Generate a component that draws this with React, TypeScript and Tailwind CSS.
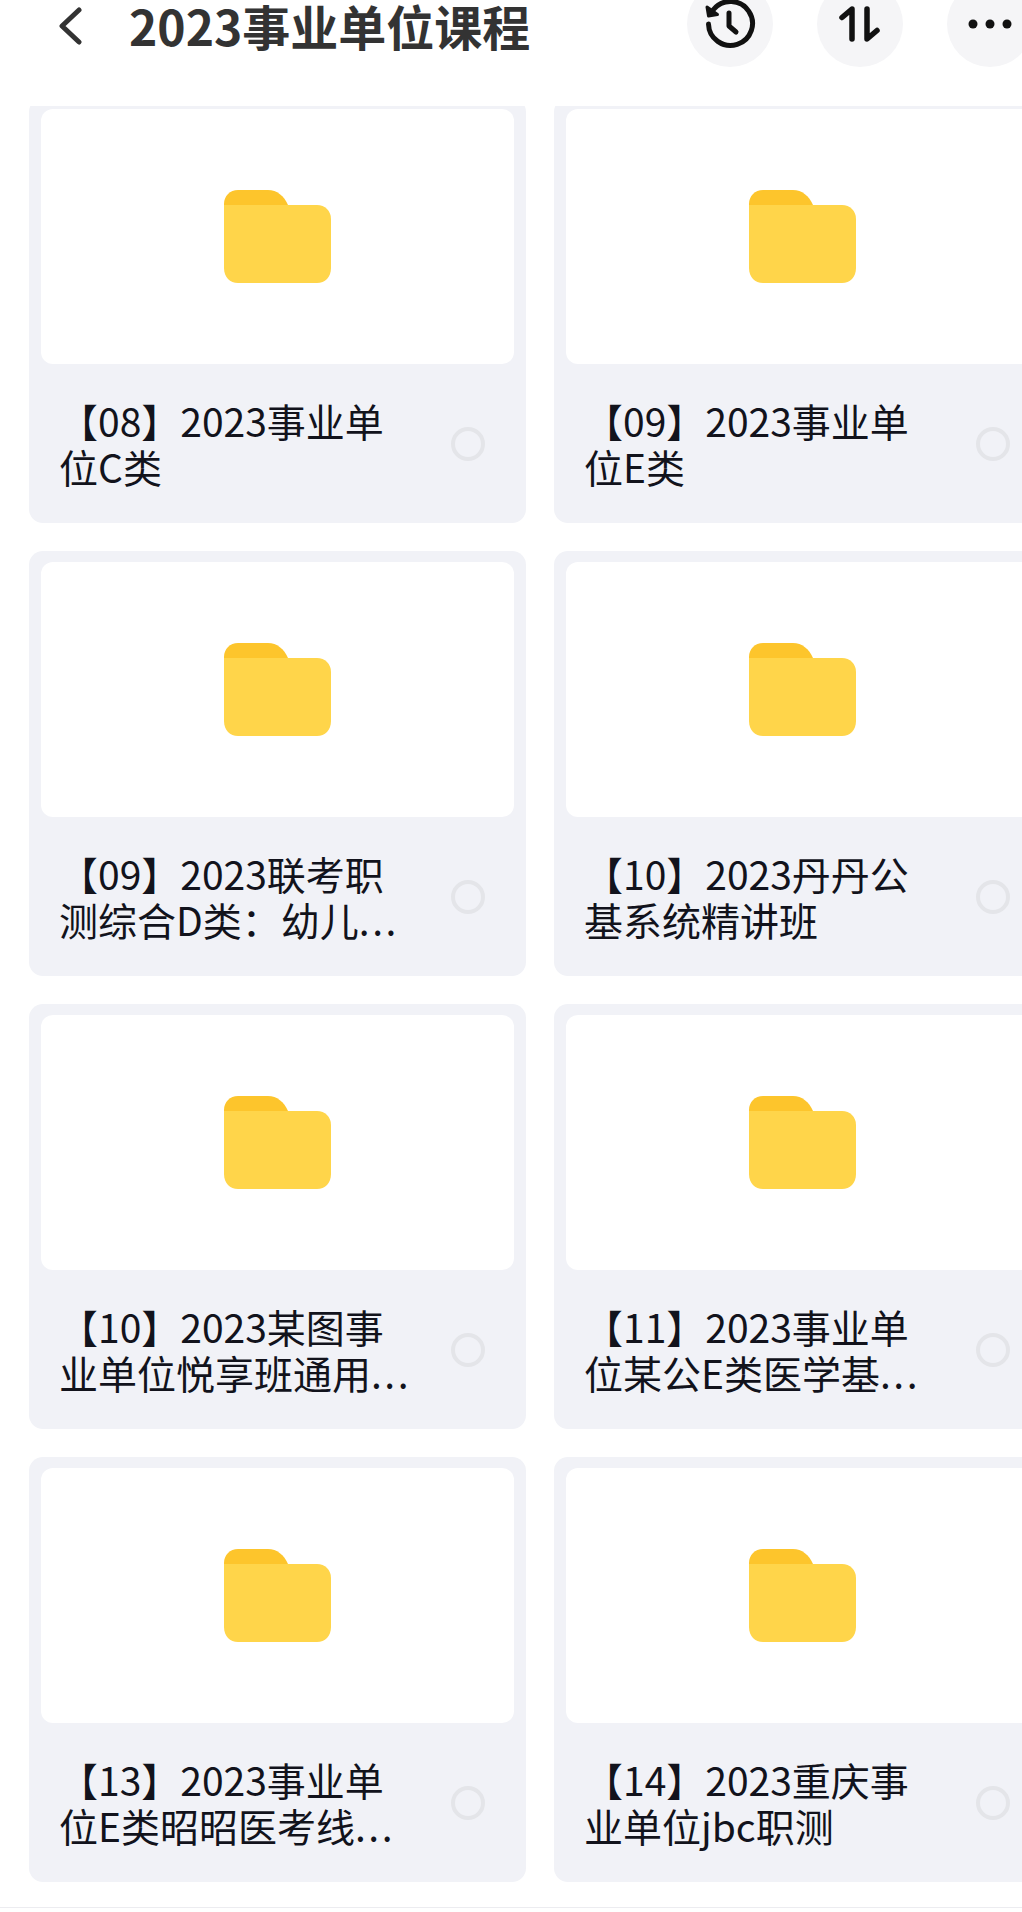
// Folder grid screen: header with actions, two-column grid of folder cards

const FONT = "font-['Noto_Sans_CJK_SC','Noto_Sans',sans-serif]";

interface Folder { line1: string; line2: string; cut?: boolean }

const FOLDERS: Folder[] = [
  { line1: "【08】2023事业单", line2: "位C类" },
  { line1: "【09】2023事业单", line2: "位E类" },
  { line1: "【09】2023联考职", line2: "测综合D类：幼儿", cut: true },
  { line1: "【10】2023丹丹公", line2: "基系统精讲班" },
  { line1: "【10】2023某图事", line2: "业单位悦享班通用", cut: true },
  { line1: "【11】2023事业单", line2: "位某公E类医学基", cut: true },
  { line1: "【13】2023事业单", line2: "位E类昭昭医考线", cut: true },
  { line1: "【14】2023重庆事", line2: "业单位jbc职测" },
];

function FolderIcon() {
  return (
    <svg width="107" height="93" viewBox="0 0 107 93">
      <path d="M0 20V14C0 6 6 0 14 0H44C53 0 60 6 64 15L66 22H0Z" fill="#fdc52c" />
      <path d="M0 15H93C101 15 107 21 107 29V78C107 87 101 93 93 93H14C6 93 0 87 0 78Z" fill="#ffd54a" />
    </svg>
  );
}

function FolderCard({ line1, line2, cut }: Folder) {
  return (
    <div className="h-[425px] rounded-[14px] bg-[#f1f2f7] px-[12px] pt-[11px]">
      <div className="flex h-[255px] items-center justify-center rounded-[12px] bg-white">
        <FolderIcon />
      </div>
      <div className="flex items-center justify-between pl-[18px] pr-[29px] pt-[33px]">
        <div className="mb-[2px] whitespace-nowrap text-[39px] leading-[46px] text-[#12131c]">
          {line1}
          <br />
          {line2}
          {cut && <span className="tracking-[2.5px]">...</span>}
        </div>
        <div className="h-[34px] w-[34px] rounded-full border-[4px] border-[#e4e5e9]" />
      </div>
    </div>
  );
}

function HeaderButton({ children }: { children: React.ReactNode }) {
  return (
    <div className="flex h-[86px] w-[86px] shrink-0 items-center justify-center rounded-full bg-[#f5f5f7]">
      {children}
    </div>
  );
}

export default function App() {
  return (
    <div className={`flex h-[1912px] w-[1022px] flex-col overflow-hidden bg-white ${FONT}`}>
      {/* Header */}
      <header className="relative z-10 flex h-[106px] shrink-0 items-start bg-white pl-[57px]">
        <svg className="mt-[7px]" width="26" height="38" viewBox="0 0 26 38" fill="none" stroke="#333" strokeWidth="5" strokeLinecap="round" strokeLinejoin="round">
          <path d="M22 3L5 19L22 35" />
        </svg>
        <h1 className="ml-[46px] text-[48px] font-bold leading-[50px] text-[#333]">2023事业单位课程</h1>
        <div className="-mr-[11px] -mt-[19px] ml-auto flex gap-[44px]">
          <HeaderButton>
            <svg width="52" height="52" viewBox="0 0 52 52" fill="none" stroke="#111" strokeWidth="5" strokeLinecap="round" strokeLinejoin="round">
              <path d="M9.5 11.5A22 22 0 1 1 4.5 26" />
              <path d="M3 9L4.5 18L13.5 16.5Z" fill="#111" strokeWidth="3" />
              <path d="M25 15V28L32 34" />
            </svg>
          </HeaderButton>
          <HeaderButton>
            <svg width="42" height="38" viewBox="0 0 42 38" fill="none" stroke="#111" strokeWidth="5.5" strokeLinecap="round" strokeLinejoin="round">
              <path d="M13 34V4L3 12.5" />
              <path d="M28 4V34L38 25.5" />
            </svg>
          </HeaderButton>
          <HeaderButton>
            <svg width="44" height="10" viewBox="0 0 44 10" fill="#111">
              <circle cx="5" cy="5" r="4.5" />
              <circle cx="22" cy="5" r="4.5" />
              <circle cx="39" cy="5" r="4.5" />
            </svg>
          </HeaderButton>
        </div>
      </header>

      {/* Folder grid, first row is scrolled partly under the header */}
      <main className="min-h-0 flex-1 overflow-hidden">
        <div className="-mt-[8px] grid grid-cols-[497px_497px] gap-x-[28px] gap-y-[28px] pl-[29px]">
          {FOLDERS.map(f => (
            <FolderCard key={f.line1 + f.line2} {...f} />
          ))}
        </div>
      </main>
      <div className="h-[5px] shrink-0 border-t border-[#ececf0]" />
    </div>
  );
}
